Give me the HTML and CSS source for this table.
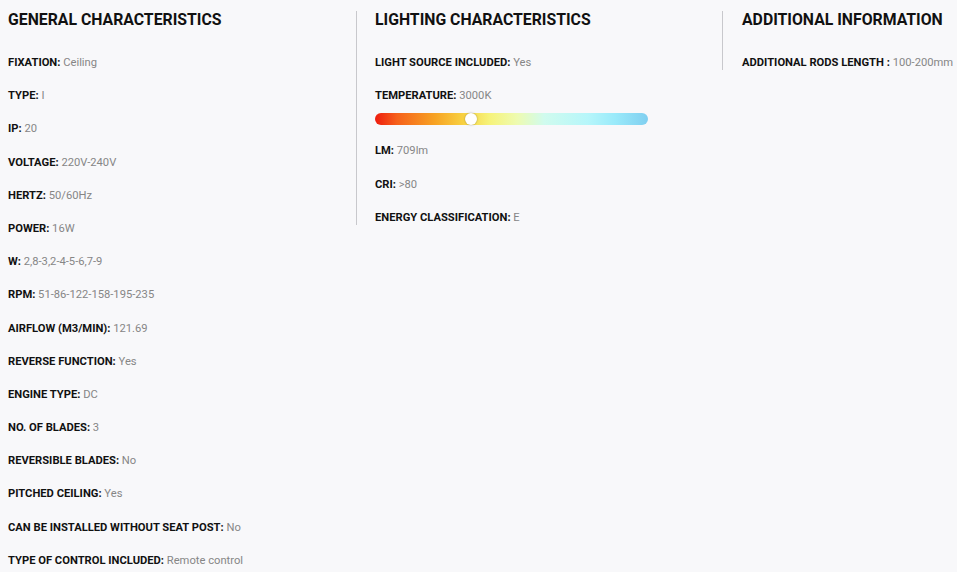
FILE: index.html
```html
<!DOCTYPE html>
<html>
<head>
<meta charset="utf-8">
<link rel="stylesheet" href="styles.css">
</head>
<body>
<div class="specs">
  <section class="col col-general">
    <h2 class="col-title">General characteristics</h2>
    <ul class="rows">
      <li class="row"><b>FIXATION:</b> <span>Ceiling</span></li>
      <li class="row"><b>TYPE:</b> <span>I</span></li>
      <li class="row"><b>IP:</b> <span>20</span></li>
      <li class="row"><b>VOLTAGE:</b> <span>220V-240V</span></li>
      <li class="row"><b>HERTZ:</b> <span>50/60Hz</span></li>
      <li class="row"><b>POWER:</b> <span>16W</span></li>
      <li class="row"><b>W:</b> <span>2,8-3,2-4-5-6,7-9</span></li>
      <li class="row"><b>RPM:</b> <span>51-86-122-158-195-235</span></li>
      <li class="row"><b>AIRFLOW (M3/MIN):</b> <span>121.69</span></li>
      <li class="row"><b>REVERSE FUNCTION:</b> <span>Yes</span></li>
      <li class="row"><b>ENGINE TYPE:</b> <span>DC</span></li>
      <li class="row"><b>NO. OF BLADES:</b> <span>3</span></li>
      <li class="row"><b>REVERSIBLE BLADES:</b> <span>No</span></li>
      <li class="row"><b>PITCHED CEILING:</b> <span>Yes</span></li>
      <li class="row"><b>CAN BE INSTALLED WITHOUT SEAT POST:</b> <span>No</span></li>
      <li class="row"><b>TYPE OF CONTROL INCLUDED:</b> <span>Remote control</span></li>
    </ul>
  </section>
  <section class="col col-light col-divided">
    <h2 class="col-title">Lighting characteristics</h2>
    <ul class="rows">
      <li class="row"><b>LIGHT SOURCE INCLUDED:</b> <span>Yes</span></li>
      <li class="row"><b>TEMPERATURE:</b> <span>3000K</span>
        <div class="temp-bar"><div class="temp-knob" style="left: 35%"></div></div>
      </li>
      <li class="row"><b>LM:</b> <span>709lm</span></li>
      <li class="row"><b>CRI:</b> <span>&gt;80</span></li>
      <li class="row"><b>ENERGY CLASSIFICATION:</b> <span>E</span></li>
    </ul>
  </section>
  <section class="col col-extra col-divided">
    <h2 class="col-title">Additional information</h2>
    <ul class="rows">
      <li class="row"><b>ADDITIONAL RODS LENGTH :</b> <span>100-200mm</span></li>
    </ul>
  </section>
</div>
</body>
</html>
```

FILE: styles.css
```css
html, body {
  margin: 0;
  padding: 0;
  background: #f8f8fa;
}
body {
  padding: 11px 8px 0 8px;
  font-family: Roboto, "Liberation Sans", sans-serif;
  color: #111;
}
.specs {
  display: flex;
  align-items: flex-start;
}
.col-general {
  width: 348px;
  flex: none;
}
.col-light {
  width: 347px;
  flex: none;
}
.col-extra {
  flex: 1;
}
.col-divided {
  border-left: 1px solid #c8c8cc;
  padding-left: 18px;
}
.col-extra.col-divided {
  padding-left: 19px;
}
.col-title {
  margin: 0;
  font-size: 15.8px;
  line-height: 18px;
  font-weight: 700;
  text-transform: uppercase;
  color: #111;
}
.rows {
  list-style: none;
  margin: 27px 0 0 0;
  padding: 0;
  display: flex;
  flex-direction: column;
  gap: 19.2px;
}
.row {
  font-size: 11.2px;
  line-height: 14px;
  white-space: nowrap;
}
.row b {
  font-weight: 700;
  color: #111;
}
.row span {
  color: #868686;
}
.temp-bar {
  position: relative;
  margin-top: 10px;
  width: 273px;
  height: 12px;
  border-radius: 6px;
  background: linear-gradient(to right, #ee1c0e 0%, #f6601a 8%, #f7a323 22%, #f8d040 32%, #f6f37a 42%, #eefbb0 52%, #d0fbee 62%, #b6f6fa 78%, #9aeafa 88%, #80cff0 100%);
}
.temp-knob {
  position: absolute;
  top: 0;
  width: 12px;
  height: 12px;
  margin-left: -6px;
  border-radius: 50%;
  background: #fff;
  box-shadow: 0 0 2px rgba(0,0,0,0.35);
}
```
